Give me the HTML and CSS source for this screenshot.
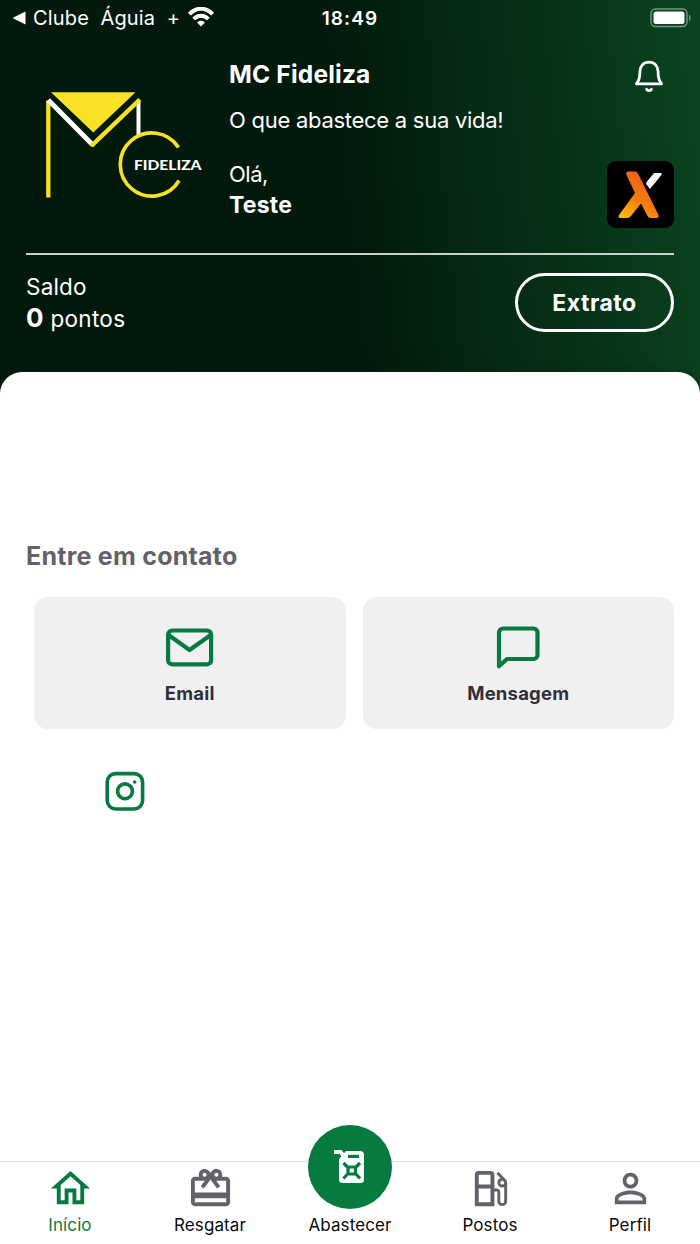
FILE: index.html
```html
<!DOCTYPE html>
<html lang="pt-BR">
<head>
    <meta charset="UTF-8">
    <meta name="viewport" content="width=device-width, initial-scale=1.0">
    <title>MC Fideliza</title>
    <link rel="stylesheet" href="styles.css">
</head>
<body>
    <header class="header">
        <div class="status-bar">
            <div class="status-left">
                <svg width="14" height="14" viewBox="0 0 14 14"><path d="M.5 7 13.500 .5v13z" fill="#fff"/></svg>
                <span class="status-app">Clube&nbsp; Águia&nbsp; +</span>
                <svg class="wifi" width="26" height="20" viewBox="0 0 26 20" fill="none" stroke="#fff" stroke-width="4">
                    <path d="M1.4 7.2C8-.1 18-.1 24.600 7.200"/>
                    <path d="M5.700 12c4.200-4.500 10.400-4.500 14.600 0"/>
                    <path d="M13 19.500l-3.900-4c2.200-2.200 5.600-2.200 7.800 0z" fill="#fff" stroke="none"/>
                </svg>
            </div>
            <span class="status-time">18:49</span>
            <svg class="battery" width="42" height="20" viewBox="0 0 42 20">
                <rect x="1" y="1" width="36" height="17.500" rx="4.500" fill="none" stroke="#fff" stroke-opacity=".45" stroke-width="1.400"/>
                <rect x="3.500" y="3.500" width="31" height="12.500" rx="2.500" fill="#fff"/>
                <path d="M39 6.500c2.200 1 2.200 5.500 0 6.500z" fill="#fff" fill-opacity=".45"/>
            </svg>
        </div>

        <div class="brand">
            <svg class="logo" width="160" height="110" viewBox="0 0 160 110" fill="none">
                <path d="M5 2.300h84.500L47.300 42.500z" fill="#f9e225"/>
                <path d="M92.500 12v33" stroke="#fff" stroke-width="4"/>
                <path d="M2.300 10.500V107.500" stroke="#f9e225" stroke-width="4.300"/>
                <path d="M2.300 10l44.500 45" stroke="#fff" stroke-width="4.800"/>
                <path d="M45.300 56l48.500-46.500" stroke="#f9e225" stroke-width="4.500"/>
                <path d="M132.500 57.500a31.600 31.600 0 1 0 .6 33" stroke="#f9e225" stroke-width="3.600"/>
                <text class="logo-text" x="88" y="80" textLength="67.500" lengthAdjust="spacingAndGlyphs">FIDELIZA</text>
            </svg>
            <div class="brand-info">
                <h1>MC Fideliza</h1>
                <p class="slogan">O que abastece a sua vida!</p>
                <p class="hello">Olá,</p>
                <p class="user">Teste</p>
            </div>
            <div class="brand-side">
                <svg class="bell" width="32" height="34" viewBox="0 0 32 34" fill="none" stroke="#fff" stroke-width="2.800" stroke-linecap="round" stroke-linejoin="round">
                    <path d="M16 3.200c-5.600 0-9.100 4-9.100 9.400 0 5.600-.9 8.700-2.300 10.400-.5.700-1.100 1-1.100 1.900h25c0-.9-.6-1.200-1.100-1.900-1.400-1.700-2.300-4.800-2.300-10.400 0-5.400-3.500-9.400-9.100-9.400z"/>
                    <path d="M13.600 30.300c.8 1.700 4 1.700 4.800 0"/>
                </svg>
                <svg class="partner" width="67" height="67" viewBox="0 0 67 67">
                    <defs>
                        <linearGradient id="flame" x1="0" y1="1" x2=".6" y2="0">
                            <stop offset="0" stop-color="#ffc20a"/>
                            <stop offset=".5" stop-color="#f57c10"/>
                            <stop offset="1" stop-color="#ee5b16"/>
                        </linearGradient>
                    </defs>
                    <rect width="67" height="67" rx="9" fill="#000"/>
                    <path d="M21 10.500h7q2 0 3 2L51.500 54q1 3-2 3h-6q-2 0-3-2l-6.500-12.500L24 55q-1.500 2-3.500 2h-7q-3 0-1.500-3L28 32 19.500 14q-1-3 1.500-3.500z" fill="url(#flame)"/>
                    <path d="M48 12h5.500q2 0 .8 2L43 28l-3.500-4.500q-.8-1.200 0-2.300l6.500-8q.8-1.200 2-1.200z" fill="#fff"/>
                </svg>
            </div>
        </div>

        <div class="balance">
            <div>
                <p class="balance-label">Saldo</p>
                <p class="balance-value"><strong>0</strong> pontos</p>
            </div>
            <button class="statement">Extrato</button>
        </div>
    </header>

    <main class="content">
        <h2>Entre em contato</h2>
        <div class="contacts">
            <a class="card">
                <svg width="48" height="46" viewBox="0 0 48 46" fill="none" stroke="#077a3f" stroke-width="4.200" stroke-linejoin="round">
                    <rect x="2.100" y="6.500" width="43" height="33.800" rx="4"/>
                    <path d="M2.500 11l21.100 15 21.100-15"/>
                </svg>
                <span>Email</span>
            </a>
            <a class="card">
                <svg width="48" height="46" viewBox="0 0 48 46" fill="none" stroke="#077a3f" stroke-width="4.200" stroke-linejoin="round">
                    <path d="M5 42.300V8.500a4 4 0 0 1 4-4h30.500a4 4 0 0 1 4 4v22.500a4 4 0 0 1-4 4h-26.500z"/>
                </svg>
                <span>Mensagem</span>
            </a>
        </div>
        <div class="social">
            <svg width="40" height="40" viewBox="0 0 40 40" fill="none" stroke="#077a3f" stroke-width="3.600">
                <rect x="2.200" y="2.600" width="35.400" height="35.400" rx="8.500"/>
                <circle cx="20" cy="20.300" r="7.400"/>
                <circle cx="29.700" cy="11" r="1.800" fill="#077a3f" stroke="none"/>
            </svg>
        </div>
    </main>

    <nav class="tabs">
        <a class="tab active">
            <svg viewBox="0 0 24 24"><path d="M12 5.690l5 4.500V18h-2v-6H9v6H7v-7.810l5-4.500M12 3L2 12h3v8h6v-6h2v6h6v-8h3"/></svg>
            <span>Início</span>
        </a>
        <a class="tab">
            <svg viewBox="0 0 24 24"><path d="M20 6h-2.180c.11-.31.18-.65.18-1a2.996 2.996 0 0 0-5.500-1.650l-.5.67-.5-.68C10.960 2.540 10.050 2 9 2 7.340 2 6 3.340 6 5c0 .35.07.69.18 1H4c-1.110 0-1.990.89-1.990 2L2 19c0 1.110.89 2 2 2h16c1.110 0 2-.89 2-2V8c0-1.110-.89-2-2-2zm-5-2c.55 0 1 .45 1 1s-.45 1-1 1-1-.45-1-1 .45-1 1-1zM9 4c.55 0 1 .45 1 1s-.45 1-1 1-1-.45-1-1 .45-1 1-1zm11 15H4v-2h16v2zm0-5H4V8h5.080L7 10.830 8.620 12 11 8.760l1-1.360 1 1.360L15.380 12 17 10.830 14.920 8H20v6z"/></svg>
            <span>Resgatar</span>
        </a>
        <a class="tab tab-main">
            <div class="fuel">
                <svg width="32" height="36" viewBox="0 0 32 36" fill="none">
                    <path d="M0 3h6.500l4.500 5.500" stroke="#fff" stroke-width="3.800"/>
                    <path d="M12 2H26a4 4 0 0 1 4 4V30.500a3.500 3.500 0 0 1-3.500 3.500h-18A3.500 3.500 0 0 1 5 30.500V10z" fill="#fff"/>
                    <rect x="14" y="5.800" width="11" height="3.200" fill="#077a3f"/>
                    <path d="M9.500 14l4.500 4.500v6l-4.500 5M26 14l-4.500 4.500v6l4.500 5M13 18h9.500M13 25h9.500" stroke="#077a3f" stroke-width="3.200"/>
                </svg>
            </div>
            <span>Abastecer</span>
        </a>
        <a class="tab">
            <svg viewBox="0 0 24 24"><path d="M19.770 7.230l.01-.01-3.720-3.720L15 4.560l2.110 2.110C16.170 7.030 15.500 7.930 15.500 9a2.500 2.500 0 0 0 3.500 2.290v7.210a1 1 0 0 1-2 0V14a2 2 0 0 0-2-2h-1V5a2 2 0 0 0-2-2H6a2 2 0 0 0-2 2v16h10v-7.500h1.500v5a2.500 2.500 0 0 0 5 0V9c0-.69-.28-1.320-.73-1.770M12 19H6v-7h6v7m0-9H6V5h6v5m6 0a1 1 0 1 1 0-2 1 1 0 0 1 0 2z"/></svg>
            <span>Postos</span>
        </a>
        <a class="tab">
            <svg viewBox="0 0 24 24"><path d="M12 5.900c1.160 0 2.100.94 2.100 2.100s-.94 2.100-2.100 2.100S9.900 9.160 9.900 8s.94-2.100 2.100-2.100m0 9c2.970 0 6.100 1.460 6.100 2.100v1.100H5.900V17c0-.64 3.130-2.100 6.100-2.100M12 4C9.790 4 8 5.790 8 8s1.790 4 4 4 4-1.790 4-4-1.790-4-4-4zm0 9c-2.670 0-8 1.340-8 4v3h16v-3c0-2.660-5.330-4-8-4z"/></svg>
            <span>Perfil</span>
        </a>
    </nav>
</body>
</html>
```
FILE: styles.css
```css
* {
    box-sizing: border-box;
}
body {
    display: flex;
    flex-direction: column;
    margin: 0;
    height: 1244px;
    font-family: Inter, "Liberation Sans", sans-serif;
    background: #fff;
    overflow: hidden;
}
h1, h2, p {
    margin: 0;
}
svg {
    display: block;
    flex: none;
}

/* Header */
.header {
    flex: none;
    height: 402px;
    padding: 0 26px;
    color: #fff;
    background: linear-gradient(84deg, #03190b 0%, #02190b 50%, #052813 66%, #073117 79%, #0a4520 100%);
}
.status-bar {
    display: grid;
    grid-template-columns: 1fr auto 1fr;
    align-items: center;
    height: 36px;
    margin: 0 -14px;
}
.status-left {
    display: flex;
    align-items: center;
}
.status-app {
    margin-left: 7px;
    font-size: 20px;
    letter-spacing: 0.15px;
    white-space: pre;
}
.wifi {
    margin: -2px 0 0 8px;
}
.status-time {
    font-size: 19px;
    font-weight: 600;
    letter-spacing: 1.1px;
}
.battery {
    justify-self: end;
    margin: -1px -4px 0 0;
}
.brand {
    display: flex;
    height: 219px;
    border-bottom: 2px solid #c9d0cb;
}
.logo {
    margin: 54px 0 0 20px;
}
.logo-text {
    fill: #fff;
    font-family: Lato, sans-serif;
    font-size: 14px;
    font-weight: 900;
}
.brand-info {
    flex: 1;
    margin-left: 23px;
    padding-top: 22px;
}
.brand-info h1 {
    font-size: 24.5px;
    line-height: 32px;
    font-weight: 700;
    letter-spacing: 0.2px;
}
.slogan {
    margin-top: 15px;
    font-size: 22px;
    line-height: 30px;
    letter-spacing: -0.27px;
}
.hello {
    margin-top: 24px;
    font-size: 22px;
    line-height: 30px;
    letter-spacing: -0.5px;
}
.user {
    margin-top: 1px;
    font-size: 23px;
    line-height: 31px;
    font-weight: 700;
    letter-spacing: 0.2px;
}
.brand-side {
    display: flex;
    flex-direction: column;
    align-items: flex-end;
    padding-top: 23px;
}
.bell {
    margin-right: 9px;
}
.partner {
    margin-top: 68px;
}
.balance {
    display: flex;
    justify-content: space-between;
    padding-top: 18px;
}
.balance-label {
    font-size: 22.5px;
    line-height: 28px;
    letter-spacing: 0.2px;
}
.balance-value {
    font-size: 22.5px;
    line-height: 34px;
    letter-spacing: 0.3px;
}
.balance-value strong {
    font-size: 26px;
}
.statement {
    width: 159px;
    height: 59px;
    padding: 0;
    border: 3px solid #fff;
    border-radius: 30px;
    background: none;
    color: #fff;
    font: inherit;
    font-size: 23px;
    font-weight: 700;
    letter-spacing: 0.5px;
}

/* Content sheet */
.content {
    flex: 1;
    margin-top: -30px;
    padding: 168px 26px 0;
    border-radius: 22px 22px 0 0;
    background: #fff;
    box-shadow: 0 -2px 6px rgba(30, 30, 30, 0.35);
}
.content h2 {
    color: #63616a;
    font-size: 25px;
    line-height: 32px;
    font-weight: 700;
    letter-spacing: 0.25px;
}
.contacts {
    display: grid;
    grid-template-columns: 1fr 1fr;
    gap: 17px;
    margin: 25px 0 0 8px;
}
.card {
    display: flex;
    flex-direction: column;
    align-items: center;
    height: 132px;
    padding-top: 27px;
    border-radius: 14px;
    background: #f0f0f0;
    color: #31303a;
    font-size: 18.5px;
    line-height: 26px;
    font-weight: 700;
    letter-spacing: 0.2px;
}
.card span {
    margin-top: 10px;
}
.social {
    margin: 42px 0 0 79px;
}

/* Bottom tabs */
.tabs {
    display: grid;
    grid-template-columns: repeat(5, 1fr);
    height: 83px;
    border-top: 1px solid #e2e2e2;
    background: #fff;
}
.tab {
    display: flex;
    flex-direction: column;
    align-items: center;
    padding-top: 3px;
    color: #0a0a0a;
    font-size: 17px;
    line-height: 24px;
    letter-spacing: 0.1px;
}
.tab > svg {
    width: 47px;
    height: 47px;
    margin-bottom: 1px;
    fill: #63616a;
}
.tab.active {
    color: #077a3f;
}
.tab.active > svg {
    fill: #077a3f;
}
.fuel {
    display: flex;
    align-items: center;
    justify-content: center;
    width: 84px;
    height: 84px;
    margin-top: -40px;
    border-radius: 50%;
    background: #077a3f;
}
.tab-main span {
    margin-top: 4px;
}
```
